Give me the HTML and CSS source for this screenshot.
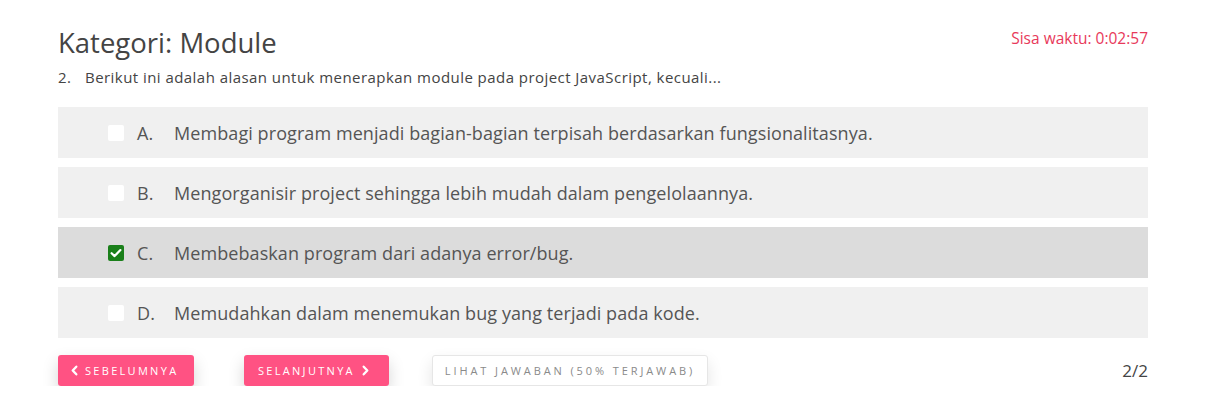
FILE: index.html
```html
<!DOCTYPE html>
<html lang="id">
<head>
<meta charset="utf-8">
<title>Kuis</title>
<link rel="stylesheet" href="styles.css">
</head>
<body>
<div class="quiz">
  <div class="header">
    <h1 class="title">Kategori: Module</h1>
    <div class="timer">Sisa waktu: 0:02:57</div>
  </div>
  <div class="question"><span class="qnum">2.</span><span>Berikut ini adalah alasan untuk menerapkan module pada project JavaScript, kecuali...</span></div>
  <div class="options">
    <div class="option"><span class="check"></span><span class="letter">A.</span><span class="text">Membagi program menjadi bagian-bagian terpisah berdasarkan fungsionalitasnya.</span></div>
    <div class="option"><span class="check"></span><span class="letter">B.</span><span class="text">Mengorganisir project sehingga lebih mudah dalam pengelolaannya.</span></div>
    <div class="option selected"><span class="check checked"><svg viewBox="0 0 16 16" width="16" height="16"><path d="M3.6 8.2 L6.6 11.1 L12.4 5.1" fill="none" stroke="#fff" stroke-width="2.2" stroke-linecap="round" stroke-linejoin="round"/></svg></span><span class="letter">C.</span><span class="text">Membebaskan program dari adanya error/bug.</span></div>
    <div class="option"><span class="check"></span><span class="letter">D.</span><span class="text">Memudahkan dalam menemukan bug yang terjadi pada kode.</span></div>
  </div>
  <div class="footer">
    <button class="btn btn-pink btn-prev"><svg viewBox="0 0 10 12" width="9" height="11"><path d="M7 1.8 L3 6 L7 10.2" fill="none" stroke="#fff" stroke-width="2.6" stroke-linecap="round" stroke-linejoin="round"/></svg>SEBELUMNYA</button>
    <button class="btn btn-pink btn-next">SELANJUTNYA<svg viewBox="0 0 10 12" width="9" height="11"><path d="M3 1.8 L7 6 L3 10.2" fill="none" stroke="#fff" stroke-width="2.6" stroke-linecap="round" stroke-linejoin="round"/></svg></button>
    <button class="btn btn-white">LIHAT JAWABAN (50% TERJAWAB)</button>
    <div class="page">2/2</div>
  </div>
</div>
</body>
</html>
```
FILE: styles.css
```css
* { box-sizing: border-box; }
body {
  margin: 0;
  background: #fff;
  font-family: "Open Sans", "Lato", sans-serif;
  color: #4a4a4a;
}
.quiz {
  width: 1090px;
  margin-left: 58px;
  padding-top: 25px;
}
.header {
  display: flex;
  justify-content: space-between;
  align-items: flex-start;
}
.title {
  margin: 0;
  font-weight: 400;
  font-size: 27.5px;
  line-height: 36px;
  color: #444;
}
.timer {
  color: #e8395a;
  font-size: 15.5px;
  line-height: 26px;
}
.question {
  display: flex;
  margin-top: 6px;
  font-size: 15px;
  letter-spacing: 0.45px;
  line-height: 20px;
  color: #444;
}
.qnum { width: 27px; }
.options {
  display: flex;
  flex-direction: column;
  gap: 9px;
  margin-top: 20px;
}
.option {
  display: flex;
  align-items: center;
  height: 51px;
  background: #f0f0f0;
  padding-left: 50px;
  font-size: 18px;
  letter-spacing: 0.08px;
  color: #555;
}
.option.selected { background: #dcdcdc; }
.check {
  width: 16px;
  height: 16px;
  background: #fff;
  border-radius: 2px;
  display: flex;
  align-items: center;
  justify-content: center;
}
.check.checked { background: #1a7f1a; }
.letter { width: 37px; margin-left: 13px; }
.footer {
  display: flex;
  align-items: center;
  margin-top: 17px;
}
.btn {
  font-family: inherit;
  border: none;
  border-radius: 3px;
  height: 31px;
  font-size: 11px;
  letter-spacing: 2.3px;
  cursor: pointer;
  display: flex;
  align-items: center;
  gap: 6px;
}
.btn-pink {
  background: #ff5283;
  color: #fff;
  box-shadow: 0 7px 16px rgba(0,0,0,0.17);
  font-weight: 500;
}
.btn-prev { width: 136px; padding: 0 12px; }
.btn-next { width: 145px; padding: 0 14px; margin-left: 50px; }
.btn-white {
  background: #fff;
  color: #8a8a8a;
  border: 1px solid #e6e6e6;
  box-shadow: 0 7px 16px rgba(0,0,0,0.11);
  width: 276px;
  justify-content: center;
  margin-left: 43px;
  letter-spacing: 2.9px;
}
.page {
  margin-left: auto;
  font-size: 17px;
  color: #444;
}
```
